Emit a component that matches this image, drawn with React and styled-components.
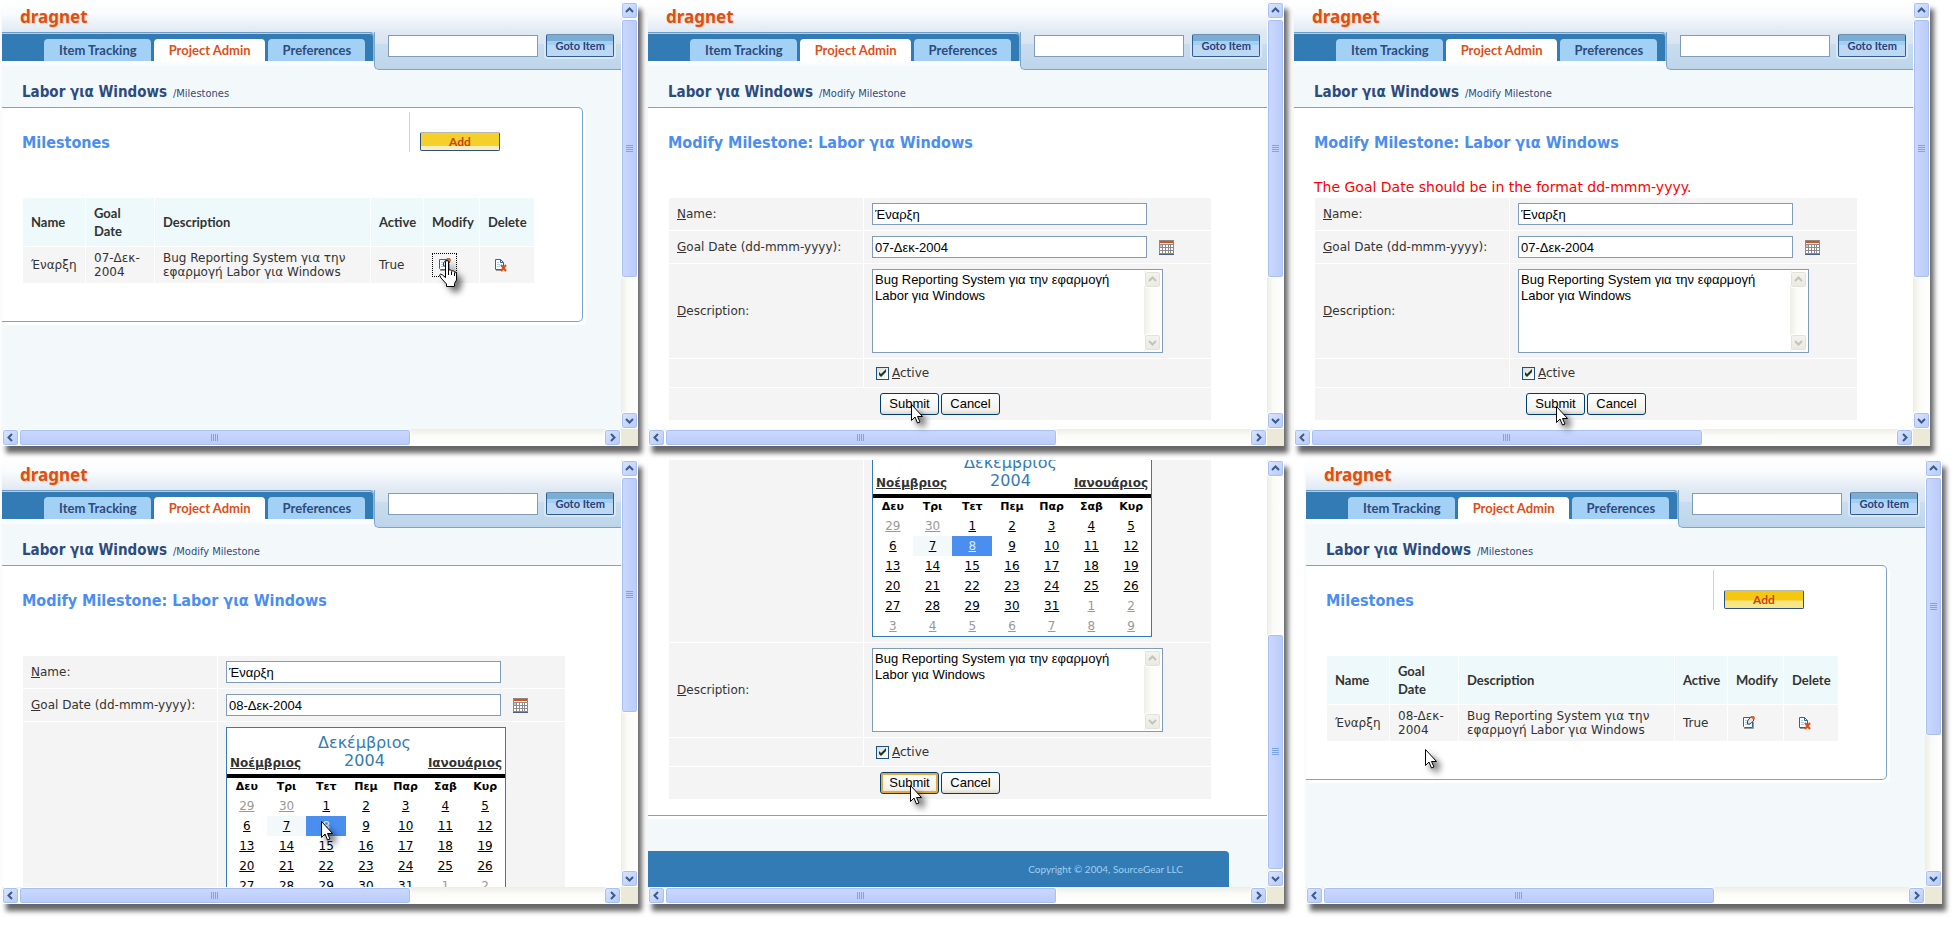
import React, { useId, useState } from "react";
import styled, { createGlobalStyle, css } from "styled-components";

const verdana = `"DejaVu Sans", Verdana, sans-serif`;
const heading = `"DejaVu Sans Condensed", "DejaVu Sans", sans-serif`;
const trebuchet = `Lato, "Trebuchet MS", sans-serif`;
const arial = `"Liberation Sans", Arial, sans-serif`;

const GlobalStyle = createGlobalStyle`
  * { box-sizing: border-box; }
  body {
    margin: 0;
    background: #fff;
    color: #333;
    font: 12px/14px ${verdana};
  }
  button, input, textarea { margin: 0; font: inherit; }
`;

/* ---------- page and windows ---------- */

const Page = styled.main`
  display: grid;
  grid-template-rows: 1fr 1fr;
  gap: 14px;
  min-height: 100vh;
  padding: 2px 14px 31px 2px;
`;

const WindowRow = styled.div`
  display: flex;
  gap: 10px;
  padding-right: ${(p) => (p.$inset ? "12px" : "0")};
`;

const Frame = styled.section`
  position: relative;
  flex: 1;
  min-width: 0;
  display: grid;
  grid-template-columns: minmax(0, 1fr) 17px;
  grid-template-rows: minmax(0, 1fr) 17px;
  height: 444px;
  margin-left: ${(p) => (p.$apart ? "12px" : "0")};
  background: #ece9d8;
  box-shadow: 4px 7px 5px rgba(0, 0, 0, 0.6);
`;

const Viewport = styled.div`
  display: flex;
  flex-direction: column;
  justify-content: ${(p) => (p.$atEnd ? "flex-end" : "flex-start")};
  overflow: hidden;
  background: #f3f8fb;
`;

const Cursor = styled.div`
  position: absolute;
  left: ${(p) => p.$x}px;
  top: ${(p) => p.$y}px;
  pointer-events: none;

  svg {
    display: block;
    filter: drop-shadow(5px 5px 3px rgba(0, 0, 0, 0.55));
  }
`;

/* ---------- scroll bars ---------- */

const Bar = styled.div`
  display: flex;
  flex-direction: ${(p) => (p.$vertical ? "column" : "row")};
  min-width: 0;
  background: linear-gradient(${(p) => (p.$vertical ? "to right" : "to bottom")}, #eeede5, #fbfbf8 40%, #fefefe);
`;

const BarButton = styled.button`
  flex: none;
  display: flex;
  align-items: center;
  justify-content: center;
  width: 17px;
  height: 17px;
  padding: 0;
  border: 1px solid #fff;
  border-radius: 3px;
  background: ${(p) => (p.$dim ? "linear-gradient(#f4f4ef, #eae9e1)" : "linear-gradient(135deg, #dbe6fe, #b6caf8)")};
  box-shadow: inset 0 0 0 1px ${(p) => (p.$dim ? "#e3e2d9" : "#a9c0f2")};
  color: ${(p) => (p.$dim ? "#c4c4bc" : "#3c5a8c")};
`;

const Track = styled.div`
  flex: 1;
  display: flex;
  flex-direction: ${(p) => (p.$vertical ? "column" : "row")};
  justify-content: ${(p) => (p.$atEnd ? "flex-end" : "flex-start")};
`;

const Thumb = styled.div`
  display: flex;
  align-items: center;
  justify-content: center;
  border: 1px solid #fff;
  border-radius: 3px;
  color: #7ba6e6;
  box-shadow: inset 0 0 0 1px #a9c0f2;
  ${(p) =>
    p.$vertical
      ? css`
          height: ${p.$size}%;
          background: linear-gradient(to right, #cbd9fe, #b9cbfa);
        `
      : css`
          width: ${p.$size}%;
          background: linear-gradient(#cbd9fe, #b9cbfa);
        `}
`;

/* ---------- dragnet chrome ---------- */

const LogoBar = styled.div`
  flex: none;
  height: 30px;
  padding: 5px 18px 0;
  background: linear-gradient(#fefefe, #f9fbfd 40%, #dfe9f3);
  color: #e04e17;
  font: bold 17px/20px "Noto Sans", ${heading};
  text-shadow: 1px 1px 1px #e6d6a8;
`;

const NavRow = styled.div`
  flex: none;
  display: flex;
  align-items: flex-start;
  background: linear-gradient(#dfe9f3 29px, #fff 29px, #f3f8fb 36px);
`;

const Tabs = styled.nav`
  display: flex;
  align-items: flex-end;
  gap: 3px;
  height: 29px;
  padding: 0 8px 0 42px;
  border-top: 1px solid #6f9cc5;
  border-right: 1px solid #8fb4d6;
  border-top-right-radius: 4px;
  background: #337bb4;
  box-shadow: inset 0 1px #b5d0e6;
`;

const Tab = styled.a`
  height: 22px;
  padding: 0 14px 0 15px;
  border-radius: 4px 4px 0 0;
  background: ${(p) => (p.$active ? "#fff" : "#a3d1f5")};
  color: ${(p) => (p.$active ? "#e04e17" : "#2d4b7c")};
  font: bold 13px/22px ${trebuchet};
  text-decoration: none;
  white-space: nowrap;
`;

const GotoForm = styled.form`
  flex: 1;
  display: flex;
  align-items: flex-end;
  gap: 8px;
  height: 38px;
  padding: 2px 0 12px 13px;
  border-left: 1px solid #7aa5cb;
  border-bottom: 1px solid #7aa5cb;
  border-bottom-left-radius: 5px;
  background: linear-gradient(#dfe9f3, #d8e4f0 12px, #c9ddef 12px, #bdd5ea);
`;

const TextInput = styled.input`
  width: ${(p) => p.$width}px;
  height: 22px;
  padding: 0 2px;
  border: 1px solid #7f9db9;
  background: #fff;
  color: #000;
  font: 13px/18px ${arial};
`;

const GotoButton = styled.button`
  width: 68px;
  height: 23px;
  padding: 0;
  border: 1px solid #2f5c94;
  border-top-color: #6f8fae;
  border-radius: 2px;
  background: linear-gradient(#7bacd3 6px, #a2cff5 6px, #a2cff5 10px, #bcd8f2 10px);
  box-shadow: 0 0 0 2px #dbe8f4;
  color: #27417a;
  font: bold 11px/18px ${trebuchet};
`;

const Crumbs = styled.div`
  flex: none;
  display: flex;
  align-items: baseline;
  gap: 6px;
  height: 37px;
  padding: 12px 20px 0;
  color: #2d4b7c;
  font: 11px/20px ${heading};

  strong {
    font-size: 15px;
  }
`;

/* ---------- content ---------- */

const Card = styled.div`
  flex: none;
  border-top: 1px solid #7aa5cb;
  border-bottom: 1px solid #7aa5cb;
  background: #fff;
  box-shadow: 0 3px #fff;
  padding: 4px 55px 15px 20px;

  ${(p) =>
    p.$boxed &&
    css`
      margin-right: 38px;
      padding: 4px 47px 37px 20px;
      border-right: 1px solid #7aa5cb;
      border-radius: 0 5px 5px 0;
      box-shadow: 3px 3px #fff;
    `}
`;

const CardHead = styled.div`
  display: flex;
  align-items: flex-end;
  justify-content: space-between;
  height: 40px;
`;

const Title = styled.h1`
  margin: 0;
  color: #4a8ef0;
  font: bold 16px/18px ${heading};
`;

const Actions = styled.div`
  width: 126px;
  height: 40px;
  padding: 20px 0 0 10px;
  border-left: 1px solid #b8d8f4;
`;

const AddButton = styled.button`
  display: block;
  width: 80px;
  height: 19px;
  padding: 0;
  border: 1px solid #2f4f80;
  border-top-color: #b9b9a8;
  border-radius: 2px;
  background: ${(p) =>
    p.$focused
      ? "linear-gradient(#f5d02a 13px, #f8eec0 13px)"
      : "linear-gradient(#f6c711 9px, #f8e78a 10px)"};
  color: #c9440f;
  font: bold 12px/16px ${trebuchet};
`;

const Message = styled.p`
  height: 45px;
  margin: 0;
  padding-top: 26px;
  color: #f00;
  font-size: 14px;
  line-height: 18px;
`;

const Grid = styled.table`
  width: 100%;
  table-layout: fixed;
  border-spacing: 1px;

  th {
    height: 48px;
    padding: 0 0 0 8px;
    background: #eef9fb;
    font: bold 13px/18px ${trebuchet};
    text-align: left;
  }

  td {
    height: 36px;
    padding: 0 0 0 8px;
    background: #f5f5f5;
  }
`;

const Col = styled.col`
  width: ${(p) => p.$width}px;
`;

const IconLink = styled.a`
  display: flex;
  align-items: center;
  justify-content: center;
  width: 25px;
  height: 24px;
  border: 1px dotted ${(p) => (p.$focused ? "#000" : "transparent")};
`;

const FormTable = styled.table`
  width: 100%;
  table-layout: fixed;
  border-spacing: 1px;

  td {
    padding: 5px 8px;
    background: #f4f4f4;
  }
`;

const Field = styled.div`
  display: flex;
  align-items: center;
  gap: 12px;
`;

const IconButton = styled.button`
  display: block;
  padding: 0;
  border: 0;
  background: none;

  svg {
    display: block;
  }
`;

const TextBox = styled.div`
  display: flex;
  width: 291px;
  height: 84px;
  padding: 1px;
  border: 1px solid #7f9db9;
  background: #fff;
`;

const TextArea = styled.textarea`
  flex: 1;
  min-width: 0;
  padding: 1px;
  border: 0;
  background: none;
  color: #000;
  font: 13px/16px ${arial};
  resize: none;
  overflow: hidden;
`;

const CheckLabel = styled.label`
  display: flex;
  align-items: center;
  gap: 3px;
  height: 18px;
  padding-left: 4px;
`;

const CheckBox = styled.input`
  appearance: none;
  width: 13px;
  height: 13px;
  border: 1px solid #1c5180;
  background: linear-gradient(135deg, #dcdcd7, #fff);

  &:checked {
    background: url("data:image/svg+xml,%3Csvg xmlns='http://www.w3.org/2000/svg' viewBox='0 0 11 11'%3E%3Cpath d='M2 4v3l2 2 5-5V1L4 6z' fill='%231c3a1c'/%3E%3C/svg%3E"),
      linear-gradient(135deg, #dcdcd7, #fff);
  }
`;

const ButtonRow = styled.div`
  display: flex;
  justify-content: center;
  gap: 2px;
`;

const PushButton = styled.button`
  min-width: 59px;
  height: 22px;
  padding: 0 8px;
  border: 1px solid #003c74;
  border-radius: 3px;
  background: linear-gradient(#fff, #f3f2ec 80%, #dcd8cc);
  box-shadow: ${(p) => (p.$hot ? "inset 0 0 0 2px #e5a93c" : "none")};
  color: #000;
  font: 13px/18px ${arial};
`;

const Footer = styled.footer`
  flex: none;
  height: 36px;
  margin: 35px 38px 0 0;
  padding-right: 46px;
  border-top-right-radius: 4px;
  background: #337bb4;
  color: #9fd0f5;
  font: 10px/36px ${trebuchet};
  text-align: right;
`;

/* ---------- calendar ---------- */

const CalendarBox = styled.div`
  width: 280px;
  border: 1px solid #337bb4;
  background: #fff;
`;

const MonthBar = styled.div`
  display: flex;
  align-items: flex-end;
  justify-content: space-between;
  height: 50px;
  padding: 0 3px 4px;
  border-bottom: 4px solid #000;
`;

const MonthName = styled.div`
  color: #337bb4;
  font-size: 16px;
  line-height: 18px;
  text-align: center;
`;

const MonthLink = styled.a`
  color: #333;
  font-weight: bold;
`;

const Days = styled.table`
  width: 100%;
  table-layout: fixed;
  border-collapse: collapse;
  text-align: center;

  th {
    height: 18px;
    padding: 0;
    color: #000;
    font-size: 11px;
  }
`;

const Day = styled.td`
  && {
    height: 20px;
    padding: 0;
    background: ${(p) => (p.$selected ? "#4a8ef0" : p.$today ? "#f3f8fb" : "#fff")};
  }

  a {
    color: ${(p) => (p.$selected ? "#dcebff" : p.$other ? "#999" : "#000")};
  }
`;

/* ---------- drawings ---------- */

const ArrowCursor = () => (
  <svg width="12" height="20" viewBox="0 0 12 20">
    <path d="M.5.5v16l3.500-3.500 2.500 6 2.500-1-2.500-5.500h5z" fill="#fff" stroke="#000" />
  </svg>
);

const HandCursor = () => (
  <svg width="18" height="28" viewBox="0 0 18 28">
    <path
      d="M6.500 2q0-1.500 1.500-1.500T9.500 2v8q2.500-1 3 1 2.500-1 3 1 2-.5 2 2v6l-2 3.500v3h-8v-2.500L2 18l-1.500-3q1-2 3 0l3 2.500z"
      fill="#fff"
      stroke="#000"
    />
    <path d="M9.500 10v5M12.500 11.500V15M15.500 12.500V16" stroke="#000" fill="none" />
  </svg>
);

const chevrons = {
  up: "M1 6l3.500-3.500L8 6",
  down: "M1 3l3.500 3.500L8 3",
  left: "M6 1L2.500 4.500 6 8",
  right: "M3 1l3.500 3.500L3 8",
};

const Chevron = ({ to }) => (
  <svg width="9" height="9" viewBox="0 0 9 9">
    <path d={chevrons[to]} fill="none" stroke="currentColor" strokeWidth="2" />
  </svg>
);

const Grip = ({ vertical }) => (
  <svg width="8" height="8" viewBox="0 0 8 8">
    <path
      d={vertical ? "M0 .5h7M0 2.500h7M0 4.500h7M0 6.500h7" : "M.5 0v7M2.500 0v7M4.500 0v7M6.500 0v7"}
      stroke="currentColor"
    />
  </svg>
);

const ModifyIcon = () => (
  <svg width="13" height="14" viewBox="0 0 13 14">
    <path d="M2 12.500h9.500V6" fill="none" stroke="#9a9a9a" />
    <path d="M1.500 1.500h9v10h-8l-1-1z" fill="#fff" stroke="#2b66a0" />
    <path d="M3 4.500h3M3 6.500h3M3 8.500h5" stroke="#a9cdf0" />
    <path d="M5.500 8V5l3-4 3 1.500V5L8 8z" fill="#e6e3dd" stroke="#444" />
    <path d="M9 0h3l1 2-1 2.500-1-2-2-1z" fill="#e0632d" />
  </svg>
);

const DeleteIcon = () => (
  <svg width="13" height="14" viewBox="0 0 13 14">
    <path d="M2 12.500h6" fill="none" stroke="#9a9a9a" />
    <path d="M1.500 1.500h5l3 3v7h-8z" fill="#fff" stroke="#2b66a0" />
    <path d="M6.500 1.500v3h3" fill="none" stroke="#2b66a0" />
    <path d="M3 4.500h2M3 6.500h3M3 8.500h3" stroke="#a9cdf0" />
    <path d="M7 7l5 6M12 7l-5 6" stroke="#e04e17" strokeWidth="2" />
  </svg>
);

const CalendarIcon = () => (
  <svg width="15" height="15" viewBox="0 0 15 15">
    <path d="M0 0h15v15H0z" fill="#8b8b8b" />
    <path d="M1 1h13v2H1z" fill="#e04e17" />
    <path
      d="M4 5h2v2H4zM7 5h2v2H7zM10 5h1v2h-1zM12 5h2v2h-2zM1 8h2v2H1zM4 8h2v2H4zM7 8h2v2H7zM10 8h1v2h-1zM12 8h2v2h-2zM1 11h2v2H1zM4 11h2v2H4zM7 11h2v2H7zM10 11h1v2h-1zM12 11h2v2h-2zM1 3h13v1H1z"
      fill="#fff"
    />
    <path d="M1 5h2v2H1z" fill="#c8c8c8" />
    <path d="M0 14h15v1H0z" fill="#4d5f86" />
  </svg>
);

/* ---------- components ---------- */

function ScrollBar({ vertical, size, atEnd }) {
  const [back, forward] = vertical ? ["up", "down"] : ["left", "right"];
  return (
    <Bar $vertical={vertical}>
      <BarButton type="button" aria-label={`Scroll ${back}`}>
        <Chevron to={back} />
      </BarButton>
      <Track $vertical={vertical} $atEnd={atEnd}>
        <Thumb $vertical={vertical} $size={size}>
          <Grip vertical={vertical} />
        </Thumb>
      </Track>
      <BarButton type="button" aria-label={`Scroll ${forward}`}>
        <Chevron to={forward} />
      </BarButton>
    </Bar>
  );
}

function Window({ children, atEnd, apart, thumb, cursor, hand }) {
  return (
    <Frame $apart={apart}>
      <Viewport $atEnd={atEnd}>{children}</Viewport>
      <ScrollBar vertical size={thumb} atEnd={atEnd} />
      <ScrollBar size={67} />
      <Cursor $x={cursor[0]} $y={cursor[1]}>
        {hand ? <HandCursor /> : <ArrowCursor />}
      </Cursor>
    </Frame>
  );
}

function Header({ section }) {
  return (
    <>
      <LogoBar>dragnet</LogoBar>
      <NavRow>
        <Tabs>
          <Tab href="#items">Item Tracking</Tab>
          <Tab href="#admin" $active>
            Project Admin
          </Tab>
          <Tab href="#preferences">Preferences</Tab>
        </Tabs>
        <GotoForm onSubmit={(e) => e.preventDefault()}>
          <TextInput $width={150} type="text" aria-label="Item number" />
          <GotoButton type="submit">Goto Item</GotoButton>
        </GotoForm>
      </NavRow>
      <Crumbs>
        <strong>Labor για Windows</strong>
        <span>/{section}</span>
      </Crumbs>
    </>
  );
}

function MilestoneList({ day, focused }) {
  return (
    <>
      <Header section="Milestones" />
      <Card $boxed>
        <CardHead>
          <Title>Milestones</Title>
          <Actions>
            <AddButton type="button" $focused={focused}>
              Add
            </AddButton>
          </Actions>
        </CardHead>
        <Message />
        <Grid>
          <colgroup>
            <Col $width={62} />
            <Col $width={68} />
            <col />
            <Col $width={52} />
            <Col $width={55} />
            <Col $width={54} />
          </colgroup>
          <thead>
            <tr>
              <th>Name</th>
              <th>
                Goal
                <br />
                Date
              </th>
              <th>Description</th>
              <th>Active</th>
              <th>Modify</th>
              <th>Delete</th>
            </tr>
          </thead>
          <tbody>
            <tr>
              <td>Έναρξη</td>
              <td>
                {day}-Δεκ-
                <br />
                2004
              </td>
              <td>
                Bug Reporting System για την
                <br />
                εφαρμογή Labor για Windows
              </td>
              <td>True</td>
              <td>
                <IconLink href="#modify" aria-label="Modify" $focused={focused}>
                  <ModifyIcon />
                </IconLink>
              </td>
              <td>
                <IconLink href="#delete" aria-label="Delete">
                  <DeleteIcon />
                </IconLink>
              </td>
            </tr>
          </tbody>
        </Grid>
      </Card>
    </>
  );
}

const weekdays = ["Δευ", "Τρι", "Τετ", "Πεμ", "Παρ", "Σαβ", "Κυρ"];

// 29 November is the first cell, December has 31 days
const weeks = Array.from({ length: 6 }, (_, w) =>
  Array.from({ length: 7 }, (_, d) => {
    const n = w * 7 + d - 1;
    if (n < 1) return { day: n + 30, other: true };
    if (n > 31) return { day: n - 31, other: true };
    return { day: n };
  })
);

function Calendar() {
  return (
    <CalendarBox>
      <MonthBar>
        <MonthLink href="#prev">Νοέμβριος</MonthLink>
        <MonthName>
          Δεκέμβριος
          <br />
          2004
        </MonthName>
        <MonthLink href="#next">Ιανουάριος</MonthLink>
      </MonthBar>
      <Days>
        <thead>
          <tr>
            {weekdays.map((w) => (
              <th key={w}>{w}</th>
            ))}
          </tr>
        </thead>
        <tbody>
          {weeks.map((week, i) => (
            <tr key={i}>
              {week.map(({ day, other }) => (
                <Day key={day} $other={other} $today={!other && day === 7} $selected={!other && day === 8}>
                  <a href="#day">{day}</a>
                </Day>
              ))}
            </tr>
          ))}
        </tbody>
      </Days>
    </CalendarBox>
  );
}

function MilestoneForm({ date, error, calendar, scrolled }) {
  const id = useId();
  const [values, setValues] = useState({
    name: "Έναρξη",
    date,
    description: "Bug Reporting System για την εφαρμογή Labor για Windows",
    active: true,
  });

  const handleChange = (e) => {
    const { name, value, type, checked } = e.target;
    setValues({ ...values, [name]: type === "checkbox" ? checked : value });
  };

  return (
    <>
      {!scrolled && <Header section="Modify Milestone" />}
      <Card as="form" onSubmit={(e) => e.preventDefault()}>
        {!scrolled && (
          <>
            <CardHead>
              <Title>Modify Milestone: Labor για Windows</Title>
            </CardHead>
            <Message>{error}</Message>
          </>
        )}
        <FormTable>
          <colgroup>
            <Col $width={194} />
            <col />
          </colgroup>
          <tbody>
            {!scrolled && (
              <>
                <tr>
                  <td>
                    <label htmlFor={id + "name"}>
                      <u>N</u>ame:
                    </label>
                  </td>
                  <td>
                    <Field>
                      <TextInput
                        $width={275}
                        id={id + "name"}
                        name="name"
                        value={values.name}
                        onChange={handleChange}
                      />
                    </Field>
                  </td>
                </tr>
                <tr>
                  <td>
                    <label htmlFor={id + "date"}>
                      <u>G</u>oal Date (dd-mmm-yyyy):
                    </label>
                  </td>
                  <td>
                    <Field>
                      <TextInput
                        $width={275}
                        id={id + "date"}
                        name="date"
                        value={values.date}
                        onChange={handleChange}
                      />
                      <IconButton type="button" aria-label="Pick a date">
                        <CalendarIcon />
                      </IconButton>
                    </Field>
                  </td>
                </tr>
              </>
            )}
            {calendar && (
              <tr>
                <td />
                <td>
                  <Calendar />
                </td>
              </tr>
            )}
            <tr>
              <td>
                <label htmlFor={id + "description"}>
                  <u>D</u>escription:
                </label>
              </td>
              <td>
                <TextBox>
                  <TextArea
                    id={id + "description"}
                    name="description"
                    value={values.description}
                    onChange={handleChange}
                  />
                  <Bar $vertical>
                    <BarButton type="button" $dim disabled aria-label="Scroll up">
                      <Chevron to="up" />
                    </BarButton>
                    <Track $vertical />
                    <BarButton type="button" $dim disabled aria-label="Scroll down">
                      <Chevron to="down" />
                    </BarButton>
                  </Bar>
                </TextBox>
              </td>
            </tr>
            <tr>
              <td />
              <td>
                <CheckLabel>
                  <CheckBox type="checkbox" name="active" checked={values.active} onChange={handleChange} />
                  <span>
                    <u>A</u>ctive
                  </span>
                </CheckLabel>
              </td>
            </tr>
            <tr>
              <td colSpan={2}>
                <ButtonRow>
                  <PushButton type="submit" $hot={scrolled}>
                    Submit
                  </PushButton>
                  <PushButton type="button">Cancel</PushButton>
                </ButtonRow>
              </td>
            </tr>
          </tbody>
        </FormTable>
      </Card>
      {scrolled && <Footer>Copyright © 2004, SourceGear LLC</Footer>}
    </>
  );
}

export default function App() {
  return (
    <>
      <GlobalStyle />
      <Page>
        <WindowRow $inset>
          <Window thumb={66} cursor={[437, 258]} hand>
            <MilestoneList day="07" focused />
          </Window>
          <Window thumb={66} cursor={[263, 402]}>
            <MilestoneForm date="07-Δεκ-2004" />
          </Window>
          <Window thumb={66} cursor={[262, 404]}>
            <MilestoneForm
              date="07-Δεκ-2004"
              error="The Goal Date should be in the format dd-mmm-yyyy."
            />
          </Window>
        </WindowRow>
        <WindowRow>
          <Window thumb={60} cursor={[319, 361]}>
            <MilestoneForm date="08-Δεκ-2004" calendar />
          </Window>
          <Window thumb={60} cursor={[262, 325]} atEnd>
            <MilestoneForm date="08-Δεκ-2004" calendar scrolled />
          </Window>
          <Window thumb={66} cursor={[119, 289]} apart>
            <MilestoneList day="08" />
          </Window>
        </WindowRow>
      </Page>
    </>
  );
}
